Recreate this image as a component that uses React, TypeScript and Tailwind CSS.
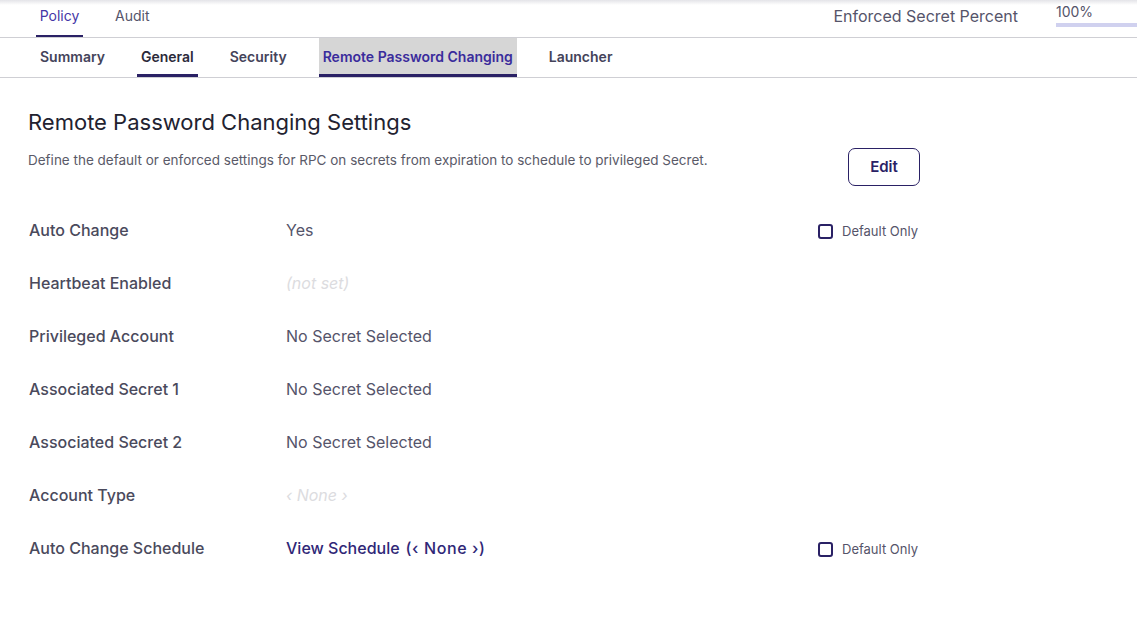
import React from 'react';

const font = { fontFamily: 'Inter, "Noto Sans", sans-serif' };

interface Row {
  label: string;
  value: string;
  kind?: 'muted' | 'link';
  defaultOnly?: boolean;
}

const rows: Row[] = [
  { label: 'Auto Change', value: 'Yes', defaultOnly: true },
  { label: 'Heartbeat Enabled', value: '(not set)', kind: 'muted' },
  { label: 'Privileged Account', value: 'No Secret Selected' },
  { label: 'Associated Secret 1', value: 'No Secret Selected' },
  { label: 'Associated Secret 2', value: 'No Secret Selected' },
  { label: 'Account Type', value: '‹ None ›', kind: 'muted' },
  { label: 'Auto Change Schedule', value: 'View Schedule', kind: 'link', defaultOnly: true },
];

const subTabs = ['Summary', 'General', 'Security', 'Remote Password Changing', 'Launcher'];

function DefaultOnly() {
  return (
    <label className="mt-[4px] flex items-center gap-[9px] text-[13px] text-[#55546a]">
      <span className="h-[15px] w-[15px] rounded-[3px] border-2 border-[#2a2165]" />
      Default Only
    </label>
  );
}

export default function App() {
  return (
    <div className="min-h-[622px] w-[1137px] bg-white" style={font}>
      {/* top tabs */}
      <div className="relative flex h-[38px] items-stretch border-b border-[#cfcfd4]">
        <div className="pointer-events-none absolute inset-x-0 top-0 h-[5px] bg-gradient-to-b from-[#e4e4e8] to-transparent" />
        <div className="ml-[36px] flex">
          <div className="flex w-[47px] items-center justify-center border-b-2 border-[#2a2165] pb-[4px] text-[14px] text-[#4536a6]">
            Policy
          </div>
          <div className="ml-[32px] flex items-center pb-[6px] text-[14px] text-[#55546a]">Audit</div>
        </div>
        <div className="ml-auto flex items-start">
          <span className="mt-[4px] text-[16px] text-[#55546a]">Enforced Secret Percent</span>
          <div className="ml-[38px] flex w-[81px] flex-col">
            <span className="mt-[1px] text-[14px] text-[#55546a]">100%</span>
            <div className="mt-[1px] h-[4px] w-full bg-[#d0d1ef]" />
          </div>
        </div>
      </div>

      {/* sub tabs */}
      <div className="flex h-[40px] gap-[28px] border-b border-[#cfcfd4] pl-[36px]">
        {subTabs.map((t) => {
          const active = t === 'General';
          const current = t === 'Remote Password Changing';
          return (
            <div
              key={t}
              className={`flex items-center border-b-[3px] px-[4px] text-[14px] font-semibold ${
                current
                  ? 'border-[#2a2165] bg-[#d6d6d6] text-[#3a2c9c]'
                  : active
                    ? 'border-[#2a2165] text-[#2b2a3a]'
                    : 'border-transparent text-[#44435a]'
              }`}
            >
              {t}
            </div>
          );
        })}
      </div>

      {/* header */}
      <div className="flex pl-[28px] pt-[30px]">
        <div className="w-[820px]">
          <h1 className="text-[22px] leading-[28px] text-[#222230]">Remote Password Changing Settings</h1>
          <p className="mt-[14px] text-[13.5px] text-[#5a5a68]">
            Define the default or enforced settings for RPC on secrets from expiration to schedule to privileged Secret.
          </p>
        </div>
        <button className="mt-[40px] h-[38px] w-[72px] rounded-[7px] border border-[#2a2165] text-[15px] font-semibold text-[#2a2165]">
          Edit
        </button>
      </div>

      {/* rows */}
      <div className="mt-[17px] pl-[29px]">
        {rows.map((r) => (
          <div key={r.label} className="flex h-[53px] items-center">
            <div className="w-[257px] text-[16px] font-medium text-[#4a4a5c]">{r.label}</div>
            <div className="w-[532px] text-[16px]">
              {r.kind === 'muted' ? (
                <span className="italic text-[#dcdce0]">{r.value}</span>
              ) : r.kind === 'link' ? (
                <span className="font-medium text-[#2f2777]">
                  {r.value}
                  <span className="ml-[6px] tracking-[0.6px]">(‹ None ›)</span>
                </span>
              ) : (
                <span className="text-[#55546a]">{r.value}</span>
              )}
            </div>
            {r.defaultOnly && <DefaultOnly />}
          </div>
        ))}
      </div>
    </div>
  );
}
